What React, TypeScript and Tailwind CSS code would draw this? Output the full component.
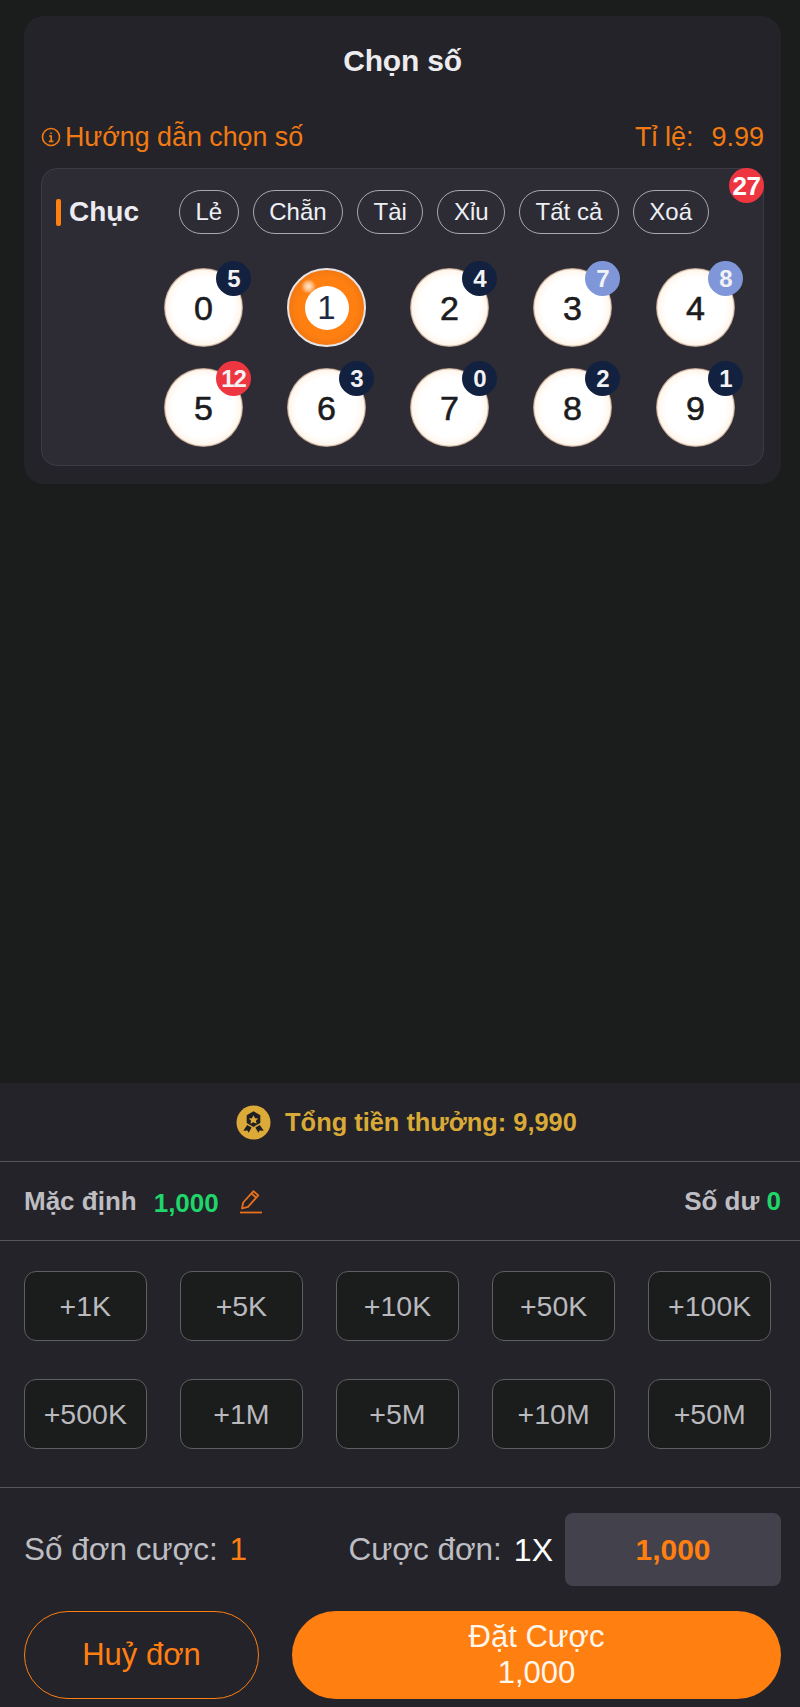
const filters = ["Lẻ", "Chẵn", "Tài", "Xỉu", "Tất cả", "Xoá"];
const balls = [
  { n: 0, c: 5, t: "navy" },
  { n: 1, c: 0, t: "sel" },
  { n: 2, c: 4, t: "navy" },
  { n: 3, c: 7, t: "blue" },
  { n: 4, c: 8, t: "blue" },
  { n: 5, c: 12, t: "red" },
  { n: 6, c: 3, t: "navy" },
  { n: 7, c: 0, t: "navy" },
  { n: 8, c: 2, t: "navy" },
  { n: 9, c: 1, t: "navy" },
];
const amounts = ["+1K", "+5K", "+10K", "+50K", "+100K", "+500K", "+1M", "+5M", "+10M", "+50M"];

function Ball({ n, c, t }: { n: number; c: number; t: string }) {
  if (t === "sel") {
    return (
      <div className="relative flex h-[79px] w-[79px] items-center justify-center rounded-full border-[2px] border-[#e6e4e6] bg-[radial-gradient(closest-side,#ff7f11_80%,#f27811_100%)]">
        <div className="absolute left-[12px] top-[9px] h-[15px] w-[15px] rounded-full bg-[radial-gradient(closest-side,#ffe9d6_0%,#ffc08a_50%,#ff7f1100_100%)]" />
        <div className="flex h-[44px] w-[44px] items-center justify-center rounded-full bg-white text-[33px] leading-none text-[#1e2a44]">
          {n}
        </div>
      </div>
    );
  }
  const badge = t === "red" ? "bg-[#ee3640]" : t === "blue" ? "bg-[#7f97d8]" : "bg-[#12213f]";
  return (
    <div className="relative flex h-[79px] w-[79px] items-center justify-center rounded-full bg-[radial-gradient(closest-side,#ffffff_76%,#fff6ec_95%,#a88872_100%)] text-[34px] leading-none text-[#1c1c20] [-webkit-text-stroke:0.6px_#1c1c20]">
      {n}
      <div className={`absolute right-[-8px] top-[-7px] flex h-[35px] w-[35px] items-center justify-center rounded-full text-[24px] font-bold leading-none tracking-[-1px] text-[#f2f2f5] [-webkit-text-stroke:0] ${badge}`}>
        {c}
      </div>
    </div>
  );
}

export default function App() {
  return (
    <div className="flex h-[1707px] w-[800px] flex-col justify-between overflow-hidden bg-[#1b1c1c] font-['Liberation_Sans',Arial,sans-serif]">
      <div className="ml-[24px] mr-[19px] mt-[16px] h-[468px] rounded-[20px] bg-[#232329] px-[17px]">
        <div className="pt-[27px] text-center text-[30px] font-bold leading-[36px] tracking-[-0.2px] text-[#ececef]">Chọn số</div>
        <div className="mt-[40px] flex h-[36px] items-center justify-between text-[27px] leading-[36px] text-[#f27a12]">
          <div className="flex items-center gap-[4px]">
            <svg width="20" height="20" viewBox="0 0 20 20" fill="none" stroke="#f27a12">
              <circle cx="10" cy="10" r="8.5" strokeWidth="1.6" />
              <path d="M10 5.5v1.6M8 9h2.2v5.2M7.8 14.4h4.6" strokeWidth="1.6" />
            </svg>
            <span className="text-[26.8px]">Hướng dẫn chọn số</span>
          </div>
          <div className="flex gap-[18px]">
            <span>Tỉ lệ:</span>
            <span>9.99</span>
          </div>
        </div>
        <div className="relative mt-[13px] h-[298px] rounded-[16px] border border-[#3d3c46] bg-[#2d2c35]">
          <div className="absolute right-[-1px] top-[-1px] flex h-[35px] w-[35px] items-center justify-center rounded-full bg-[#ee3640] text-[26px] font-bold leading-none tracking-[-0.5px] text-white">27</div>
          <div className="flex items-center pl-[14px] pt-[21px]">
            <div className="h-[27px] w-[5px] rounded-[2px] bg-[#ff7f11]" />
            <div className="ml-[8px] w-[110px] text-[28px] font-bold leading-[44px] text-[#ecebf1]">Chục</div>
            <div className="flex gap-[14px]">
              {filters.map((f) => (
                <div key={f} className="flex h-[44px] items-center rounded-full border-[1.5px] border-[#a9a8ae] px-[15.5px] text-[24px] leading-none text-[#edf0f5]">
                  {f}
                </div>
              ))}
            </div>
          </div>
          <div className="ml-[122px] mt-[34px] grid grid-cols-[repeat(5,79px)] gap-x-[44px] gap-y-[21px]">
            {balls.map((b) => (
              <Ball key={b.n} n={b.n} c={b.c} t={b.t} />
            ))}
          </div>
        </div>
      </div>

      <div className="h-[624px] bg-[#232329]">
        <div className="flex h-[79px] items-center justify-center gap-[14px] border-b border-[#55555a] pl-[13px] text-[25.4px] font-bold text-[#d9aa37]">
          <svg width="35" height="35" viewBox="0 0 36 36">
            <circle cx="18" cy="18" r="17.5" fill="#dcaa38" />
            <path d="M18 6.5l7 4v8l-7 4-7-4v-8z" fill="#1f1f24" />
            <path d="M18 10.5l1.6 3.1 3.3.4-2.4 2.2.7 3.2-3.2-1.7-3.2 1.7.7-3.2-2.4-2.2 3.3-.4z" fill="#dcaa38" />
            <path d="M11.5 20.5l4.6 2.7-3.1 5.3-1.3-2.2-4.2.1zM24.5 20.5l-4.6 2.7 3.1 5.3 1.3-2.2 4.2.1z" fill="#1f1f24" />
          </svg>
          <span>Tổng tiền thưởng: 9,990</span>
        </div>
        <div className="flex h-[79px] items-center justify-between border-b border-[#55555a] pl-[24px] pr-[19px]">
          <div className="flex items-center">
            <span className="text-[26px] font-bold text-[#bdbdc2]">Mặc định</span>
            <span className="ml-[17px] mt-[5px] text-[26px] font-bold text-[#1fd66a]">1,000</span>
            <svg className="ml-[20px]" width="24" height="26" viewBox="0 0 24 26" fill="none" stroke="#ea6f1a" strokeWidth="1.8">
              <path d="M1 24.5h22" />
              <path d="M3 20.5l1.2-6L14.5 3.2l4.8 4.2L9 18.8z" strokeLinejoin="round" />
              <path d="M12.5 5.5l4.8 4.2" />
            </svg>
          </div>
          <div className="text-[26px] font-bold text-[#bdbdc2]">
            Số dư <span className="text-[#1fd66a]">0</span>
          </div>
        </div>
        <div className="grid h-[247px] grid-cols-5 content-start gap-x-[33.5px] gap-y-[38px] border-b border-[#55555a] pl-[24px] pr-[29px] pt-[30px]">
          {amounts.map((a) => (
            <div key={a} className="flex h-[70px] items-center justify-center rounded-[12px] border-[1.5px] border-[#5f5f63] bg-[#1b1c1c] text-[28.5px] text-[#b9b9be]">
              {a}
            </div>
          ))}
        </div>
        <div className="flex items-center pl-[24px] pr-[19px] pt-[25px]">
          <div className="text-[31.5px] text-[#bdbdc2]">
            Số đơn cược: <span className="ml-[3px] text-[#ff7f11]">1</span>
          </div>
          <div className="ml-auto text-[31.5px] text-[#bdbdc2]">Cược đơn:</div>
          <div className="ml-[12px] text-[32px] text-white">1X</div>
          <div className="ml-[12px] flex h-[73px] w-[216px] items-center justify-center rounded-[8px] bg-[#42414c] text-[30px] font-bold text-[#ff7f11]">
            1,000
          </div>
        </div>
        <div className="mt-[25px] flex gap-[33px] pl-[24px] pr-[19px]">
          <div className="flex h-[88px] w-[235px] items-center justify-center rounded-full border-[1.5px] border-[#ff7f11] text-[31px] text-[#ff7f11]">
            Huỷ đơn
          </div>
          <div className="flex h-[88px] flex-1 flex-col items-center justify-center rounded-full bg-[#ff7f11] text-[31px] leading-[36px] text-[#fff6ec]">
            <span>Đặt Cược</span>
            <span>1,000</span>
          </div>
        </div>
      </div>
    </div>
  );
}
